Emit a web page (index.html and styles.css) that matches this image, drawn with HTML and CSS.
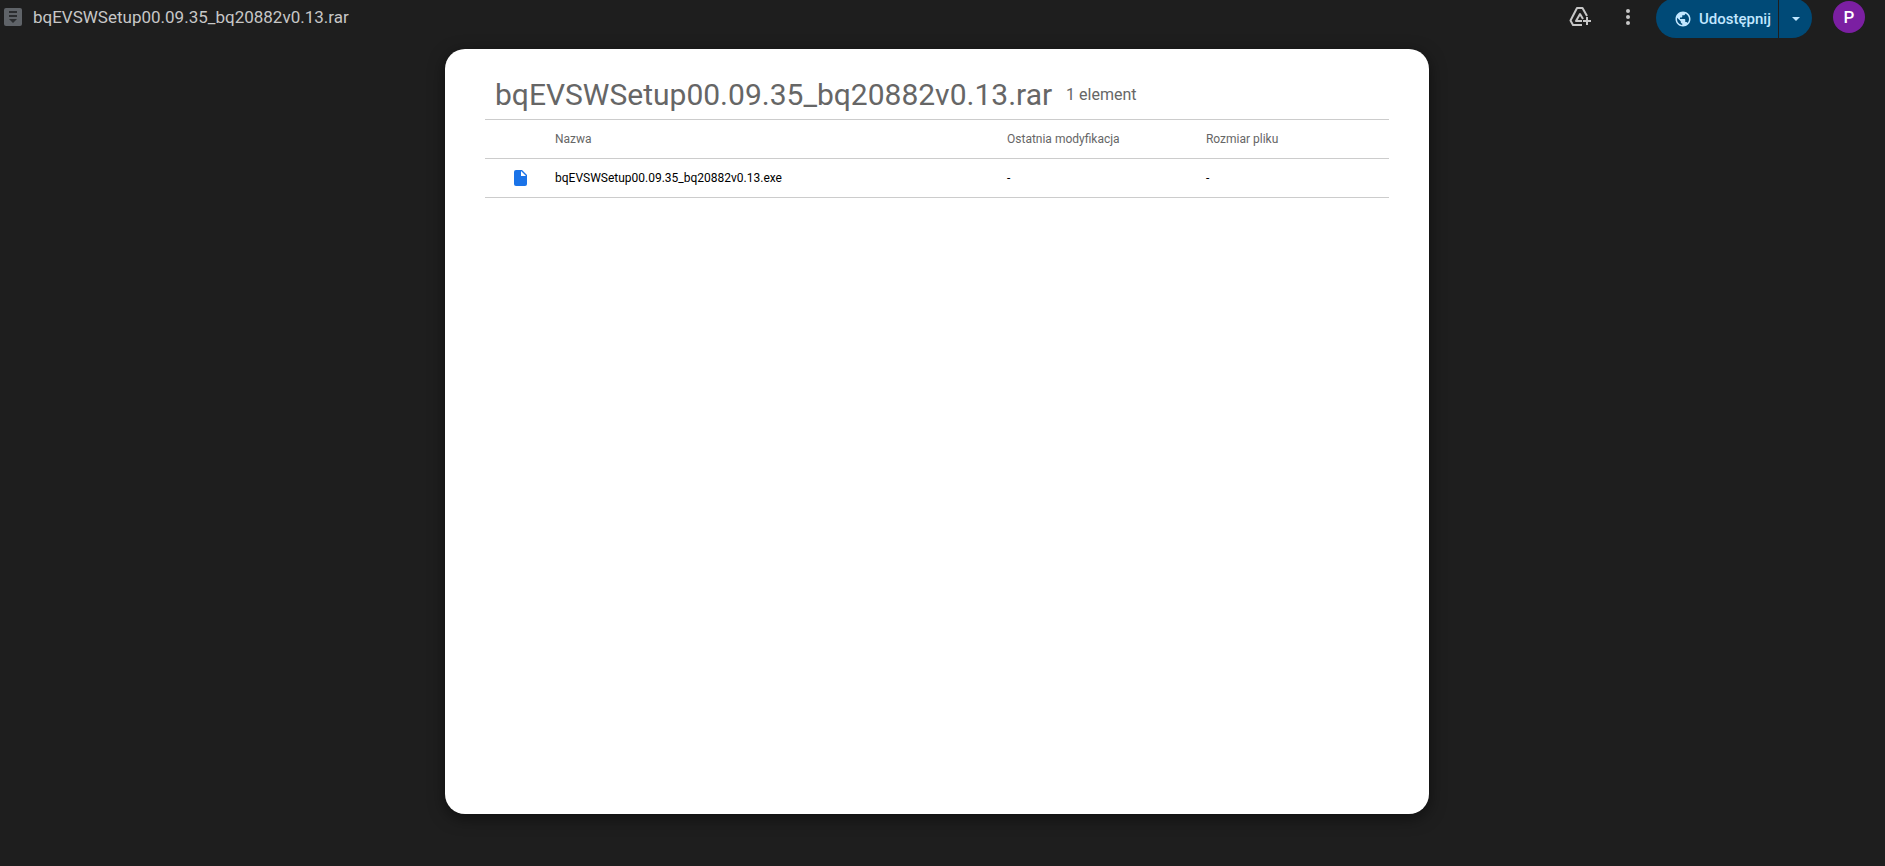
FILE: index.html
```html
<!DOCTYPE html>
<html lang="pl">
<head>
    <meta charset="utf-8">
    <title>bqEVSWSetup00.09.35_bq20882v0.13.rar</title>
    <link rel="stylesheet" href="styles.css">
</head>
<body>
<header class="toolbar">
    <svg class="archive_icon" viewBox="0 0 18 18" aria-hidden="true">
        <rect width="18" height="18" rx="2" fill="#5f6368"/>
        <path d="M5 3h8v2H5zM5 7h8v2H5zM5 11h8l-4 4z" fill="#2b2d2f"/>
    </svg>
    <span class="file_name">bqEVSWSetup00.09.35_bq20882v0.13.rar</span>
    <div class="actions">
        <button class="icon_button" aria-label="Dodaj skrót do Dysku">
            <svg width="24" height="24" viewBox="0 0 24 24" fill="none" stroke="#c7c7c7" stroke-width="2" stroke-linejoin="round">
                <path d="M14 20H5l-2.500-4.500L9 3h5.500l4.500 8"/>
                <path d="M14 16H8l4-7 3 5"/>
                <path d="M19 12v8M15 16h8"/>
            </svg>
        </button>
        <button class="icon_button" aria-label="Więcej działań">
            <svg width="24" height="24" viewBox="0 0 24 24" fill="#c7c7c7">
                <circle cx="12" cy="6" r="2"/>
                <circle cx="12" cy="12" r="2"/>
                <circle cx="12" cy="18" r="2"/>
            </svg>
        </button>
        <div class="share">
            <button class="share_main">
                <svg width="18" height="18" viewBox="0 0 24 24" fill="#c2e7ff">
                    <path d="M12 2C6.480 2 2 6.480 2 12s4.480 10 10 10 10-4.480 10-10S17.520 2 12 2zm-1 17.930c-3.950-.490-7-3.850-7-7.930 0-.620.080-1.210.210-1.790L9 15v1c0 1.100.900 2 2 2v1.930zm6.900-2.540c-.260-.810-1-1.390-1.900-1.390h-1v-3c0-.550-.450-1-1-1H8v-2h2c.550 0 1-.450 1-1V7h2c1.100 0 2-.900 2-2v-.410c2.930 1.190 5 4.060 5 7.410 0 2.080-.800 3.970-2.100 5.390z"/>
                </svg>
                Udostępnij
            </button>
            <button class="share_more" aria-label="Szybkie działania udostępniania">
                <svg width="8" height="4" viewBox="0 0 8 4"><path d="M0 0h8L4 4z" fill="#c2e7ff"/></svg>
            </button>
        </div>
        <button class="avatar" aria-label="Konto">P</button>
    </div>
</header>
<div class="content">
    <main class="viewer">
        <div class="heading">
            <h1>bqEVSWSetup00.09.35_bq20882v0.13.rar</h1>
            <span class="count">1 element</span>
        </div>
        <table>
            <thead>
            <tr>
                <th class="col_icon"></th>
                <th class="col_name">Nazwa</th>
                <th class="col_date">Ostatnia modyfikacja</th>
                <th class="col_size">Rozmiar pliku</th>
            </tr>
            </thead>
            <tbody>
            <tr>
                <td class="col_icon">
                    <svg width="13" height="16" viewBox="0 0 13 16">
                        <path d="M2 0h6l5 5v9a2 2 0 0 1-2 2H2a2 2 0 0 1-2-2V2a2 2 0 0 1 2-2z" fill="#1a73e8"/>
                        <path d="M7 1v5h5z" fill="#fff"/>
                    </svg>
                </td>
                <td>bqEVSWSetup00.09.35_bq20882v0.13.exe</td>
                <td>-</td>
                <td>-</td>
            </tr>
            </tbody>
        </table>
    </main>
</div>
</body>
</html>
```
FILE: styles.css
```css
* {
    box-sizing: border-box;
}

body {
    margin: 0;
    min-height: 100vh;
    display: flex;
    flex-direction: column;
    background-color: #1e1e1e;
    font-family: Roboto, Arial, sans-serif;
}

button {
    border: none;
    padding: 0;
    background: none;
    font-family: inherit;
    cursor: pointer;
}

.toolbar {
    display: flex;
    align-items: center;
    height: 34px;
    padding: 0 20px 0 4px;
}

.archive_icon {
    width: 18px;
    height: 18px;
}

.file_name {
    margin-left: 11px;
    font-size: 17px;
    line-height: 20px;
    color: #c7c7c7;
}

.actions {
    display: flex;
    align-items: center;
    margin-left: auto;
}

.icon_button {
    display: flex;
    width: 24px;
    height: 24px;
    margin-right: 24px;
}

.icon_button + .share {
    margin-left: -8px;
}

.share {
    display: flex;
    gap: 1px;
    height: 40px;
    margin-top: 2px;
    margin-right: 21px;
}

.share_main, .share_more {
    display: flex;
    align-items: center;
    padding-top: 2px;
    background-color: #004a77;
    color: #c2e7ff;
}

.share_main {
    gap: 7px;
    width: 122px;
    padding-left: 18px;
    border-radius: 20px 0 0 20px;
    font-size: 15px;
    font-weight: 500;
}

.share_more {
    justify-content: center;
    width: 33px;
    border-radius: 0 20px 20px 0;
}

.avatar {
    width: 32px;
    height: 32px;
    border-radius: 50%;
    background-color: #7b1fa2;
    color: #fff;
    font-size: 17px;
    font-weight: 500;
}

.content {
    flex: 1;
    display: flex;
    justify-content: center;
    padding: 15px 11px 52px 0;
}

.viewer {
    width: 100%;
    max-width: 984px;
    padding: 20px 40px;
    border-radius: 20px;
    background-color: #fff;
    box-shadow: 0 4px 16px rgba(0, 0, 0, 0.5);
}

.heading {
    display: flex;
    align-items: center;
    height: 50px;
    padding-left: 10px;
    color: #666;
}

h1 {
    margin: 0;
    font-size: 30px;
    font-weight: 400;
}

.count {
    margin-left: 14px;
    font-size: 16px;
}

table {
    width: 100%;
    table-layout: fixed;
    border-collapse: collapse;
    border-top: 1px solid #ccc;
    font-size: 12px;
}

th, td {
    height: 39px;
    padding: 0;
    border-bottom: 1px solid #ccc;
    text-align: left;
    font-weight: 400;
}

th {
    color: #666;
}

.col_icon {
    width: 70px;
    padding-left: 29px;
}

.col_icon svg {
    display: block;
}

.col_name {
    width: 50%;
}

.col_date {
    width: 22%;
}
```
